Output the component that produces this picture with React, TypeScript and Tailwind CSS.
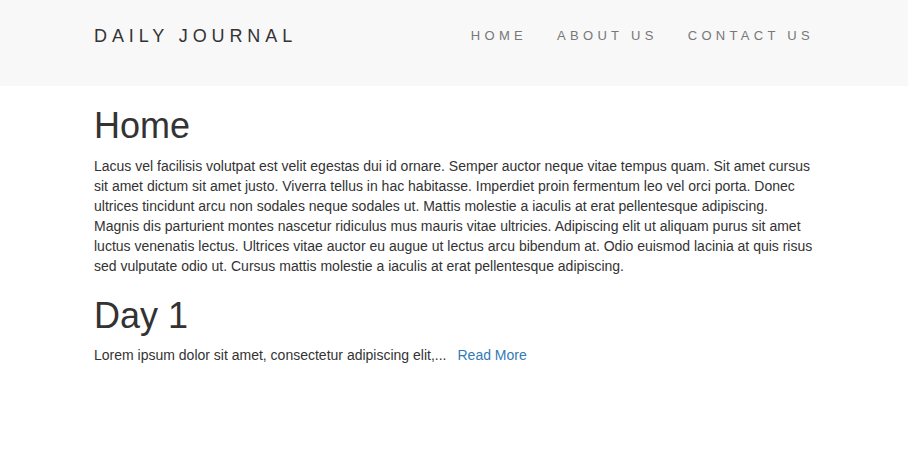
const posts = [
  {
    title: "Day 1",
    body: "Lorem ipsum dolor sit amet, consectetur adipiscing elit,",
  },
];

export default function App() {
  return (
    <div className="min-h-screen bg-white text-[14px] leading-[20px] text-[#333] font-['Liberation_Sans',Arial,sans-serif]">
      {/* Navbar */}
      <nav className="h-[86px] bg-[#f8f8f8]">
        <div className="mx-auto w-[750px] px-[15px] pt-[26px] flex justify-between">
          <a href="#" className="text-[18px] leading-[20px] tracking-[4.9px] text-[#333] uppercase">
            Daily Journal
          </a>
          <ul className="flex -mr-[15px]">
            <li><a href="#" className="block px-[15px] text-[13px] leading-[20px] tracking-[4.3px] text-[#777] uppercase">Home</a></li>
            <li><a href="#" className="block px-[15px] text-[13px] leading-[20px] tracking-[4.3px] text-[#777] uppercase">About Us</a></li>
            <li><a href="#" className="block px-[15px] text-[13px] leading-[20px] tracking-[4.3px] text-[#777] uppercase">Contact Us</a></li>
          </ul>
        </div>
      </nav>

      {/* Content */}
      <div className="mx-auto w-[750px] px-[15px]">
        <h1 className="mt-[20px] mb-[10px] text-[36px] leading-[1.1]">Home</h1>
        <p className="mb-[10px]">
          Lacus vel facilisis volutpat est velit egestas dui id ornare. Semper auctor neque vitae tempus quam. Sit amet cursus sit amet dictum sit amet justo. Viverra tellus in hac habitasse. Imperdiet proin fermentum leo vel orci porta. Donec ultrices tincidunt arcu non sodales neque sodales ut. Mattis molestie a iaculis at erat pellentesque adipiscing. Magnis dis parturient montes nascetur ridiculus mus mauris vitae ultricies. Adipiscing elit ut aliquam purus sit amet luctus venenatis lectus. Ultrices vitae auctor eu augue ut lectus arcu bibendum at. Odio euismod lacinia at quis risus sed vulputate odio ut. Cursus mattis molestie a iaculis at erat pellentesque adipiscing.
        </p>

        {posts.map((post) => (
          <div key={post.title}>
            <h1 className="mt-[20px] mb-[10px] text-[36px] leading-[1.1]">{post.title}</h1>
            <p className="mb-[10px]">
              {post.body}...
              <a href="#" className="ml-[11px] text-[#337ab7]">Read More</a>
            </p>
          </div>
        ))}
      </div>
    </div>
  );
}
